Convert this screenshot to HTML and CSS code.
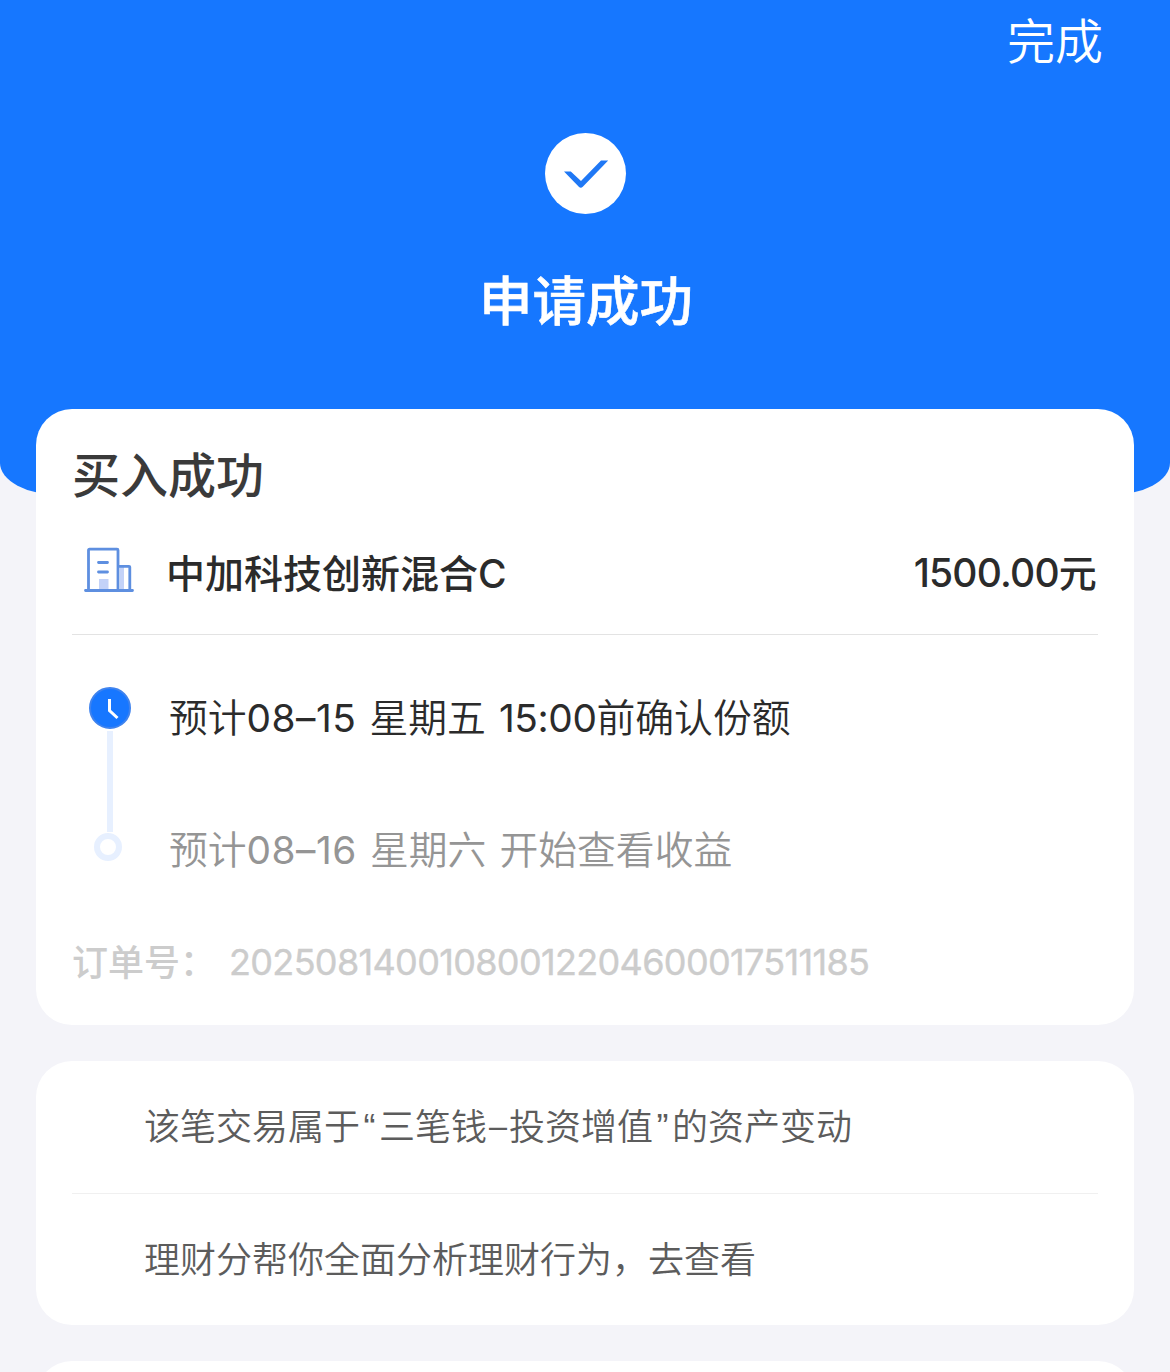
FILE: index.html
```
<!DOCTYPE html>
<html lang="zh-CN">
<head>
    <meta charset="UTF-8">
    <meta name="viewport" content="width=device-width, initial-scale=1.0">
    <title>申请成功</title>
    <link rel="stylesheet" href="styles.css">
</head>
<body>
    <header>
        <a class="done">完成</a>
        <svg class="success-icon" viewBox="0 0 82 82">
            <circle cx="40.5" cy="41.5" r="40.5" fill="#fff"/>
            <path d="M19 39.500h6.800L36 49 56 28.500h7.200L37.800 54.800q-2 2-4 0z" fill="#1f78f5"/>
        </svg>
        <h1>申请成功</h1>
    </header>

    <main>
        <!-- Order -->
        <section class="card order">
            <h2>买入成功</h2>
            <div class="fund">
                <svg class="fund-icon" viewBox="0 0 50 46">
                    <path d="M15 32h9.500v11H15zM36 20h4v23h-4z" fill="#c3d2f8"/>
                    <g fill="none" stroke="#5e8fe0" stroke-width="2.800" stroke-linecap="round" stroke-linejoin="round">
                        <path d="M4.500 43V3.200q0-1 1-1H33q1 0 1 1V43M34 19.300h11q.8 0 .8.800V43M1.500 43.500h47M14.500 15.500h9M14.500 25h9"/>
                    </g>
                </svg>
                <span class="fund-name">中加科技创新混合C</span>
                <span class="amount">1500.00<span class="unit">元</span></span>
            </div>

            <div class="timeline">
                <div class="track">
                    <svg class="clock" viewBox="0 0 42 42">
                        <circle cx="21" cy="21" r="20" fill="#1777ff" stroke="#3f83ee" stroke-width="2"/>
                        <path d="M20.500 12v11.500l8 7.500" fill="none" stroke="#fff" stroke-width="3"/>
                    </svg>
                    <div class="line"></div>
                    <div class="dot"></div>
                </div>
                <div class="steps">
                    <p class="step active">预计<span class="num">08–15</span> 星期五 <span class="time">15:00</span>前确认份额</p>
                    <p class="step">预计<span class="num">08–16</span> 星期六 开始查看收益</p>
                </div>
            </div>

            <div class="order-no">
                <span class="order-label">订单号：</span>
                <span class="order-value">20250814001080012204600017511185</span>
            </div>
        </section>

        <!-- Tips -->
        <section class="card tips">
            <p class="tip">该笔交易属于<span class="quote">“</span>三笔钱<span class="dash">–</span>投资增值<span class="quote">”</span>的资产变动</p>
            <p class="tip">理财分帮你全面分析理财行为，去查看</p>
        </section>

        <section class="card more"></section>
    </main>
</body>
</html>
```

FILE: styles.css
```
* {
    margin: 0;
    padding: 0;
    box-sizing: border-box;
}

body {
    font-family: Inter, 'Noto Sans CJK SC', sans-serif;
    background-color: #f4f4f9;
    color: #333;
}

header {
    display: flex;
    flex-direction: column;
    align-items: center;
    height: 495px;
    background-color: #1677ff;
    border-radius: 0 0 60px 60px / 0 0 32px 32px;
    color: #fff;
}

.done {
    align-self: flex-end;
    margin: 6px 67px 0 0;
    font-size: 48px;
    font-weight: 350;
    line-height: 72px;
}

.success-icon {
    width: 82px;
    height: 82px;
    margin: 54px 0 0 2px;
}

header h1 {
    margin: 48px 0 0 2px;
    font-size: 53.5px;
    font-weight: 500;
    line-height: 80px;
    -webkit-text-stroke: 0.6px #fff;
}

main {
    display: flex;
    flex-direction: column;
    gap: 36px;
    height: 963px;
    margin-top: -86px;
    padding: 0 36px;
    overflow: hidden;
}

.card {
    flex-shrink: 0;
    padding: 0 36px;
    background-color: #fff;
    border-radius: 36px;
}

/* Order */
.order {
    height: 616px;
    padding-top: 31px;
}

.order h2 {
    font-size: 48px;
    font-weight: 500;
    line-height: 72px;
    color: #3a3a3a;
}

.fund {
    display: flex;
    align-items: center;
    height: 123px;
    padding-bottom: 5px;
    border-bottom: 1px solid #e3e3e3;
    font-size: 39px;
    font-weight: 500;
    color: #2b2b2b;
}

.fund-icon {
    width: 50px;
    height: 46px;
    margin: -2px 32px 0 12px;
}

.amount {
    margin: 0 2px 0 auto;
    letter-spacing: -0.8px;
}

.unit {
    font-size: 38px;
}

.timeline {
    display: flex;
    height: 295px;
    padding-top: 52px;
}

.track {
    display: flex;
    flex-direction: column;
    align-items: center;
    width: 42px;
    margin: 0 38.5px 0 16.5px;
}

.clock {
    width: 42px;
    height: 42px;
}

.line {
    width: 6px;
    height: 101px;
    margin-top: 2px;
    background-color: #e7f0ff;
}

.dot {
    width: 28px;
    height: 28px;
    margin: 1px 3px 0 0;
    border: 6px solid #e7f0ff;
    border-radius: 50%;
}

.step {
    height: 132px;
    font-size: 38.8px;
    font-weight: 350;
    line-height: 62px;
    color: #959595;
    white-space: nowrap;
    word-spacing: 2.2px;
}

.step.active {
    color: #2b2b2b;
}

.num {
    font-weight: 400;
    letter-spacing: 0.5px;
}

.time {
    font-weight: 400;
    letter-spacing: -0.4px;
}

.order-no {
    display: flex;
    align-items: center;
    height: 64px;
    font-size: 36px;
    font-weight: 500;
    color: #ccc;
}

.order-label {
    width: 157px;
    margin-top: -4px;
}

.order-value {
    font-weight: 400;
    letter-spacing: -0.66px;
    -webkit-text-stroke: 0.4px #ccc;
}

/* Tips */
.tips {
    height: 264px;
}

.tip {
    height: 132px;
    padding-left: 72px;
    font-size: 36px;
    font-weight: 350;
    line-height: 133px;
    color: #5c5c5c;
    white-space: nowrap;
}

.tip + .tip {
    border-top: 1px solid #f0f0f0;
}

.quote,
.dash {
    display: inline-block;
    width: 19px;
    line-height: 1;
    text-align: center;
}

.quote {
    font-family: 'Liberation Sans', sans-serif;
}

.dash {
    width: 22px;
}

.more {
    height: 100px;
}
```
